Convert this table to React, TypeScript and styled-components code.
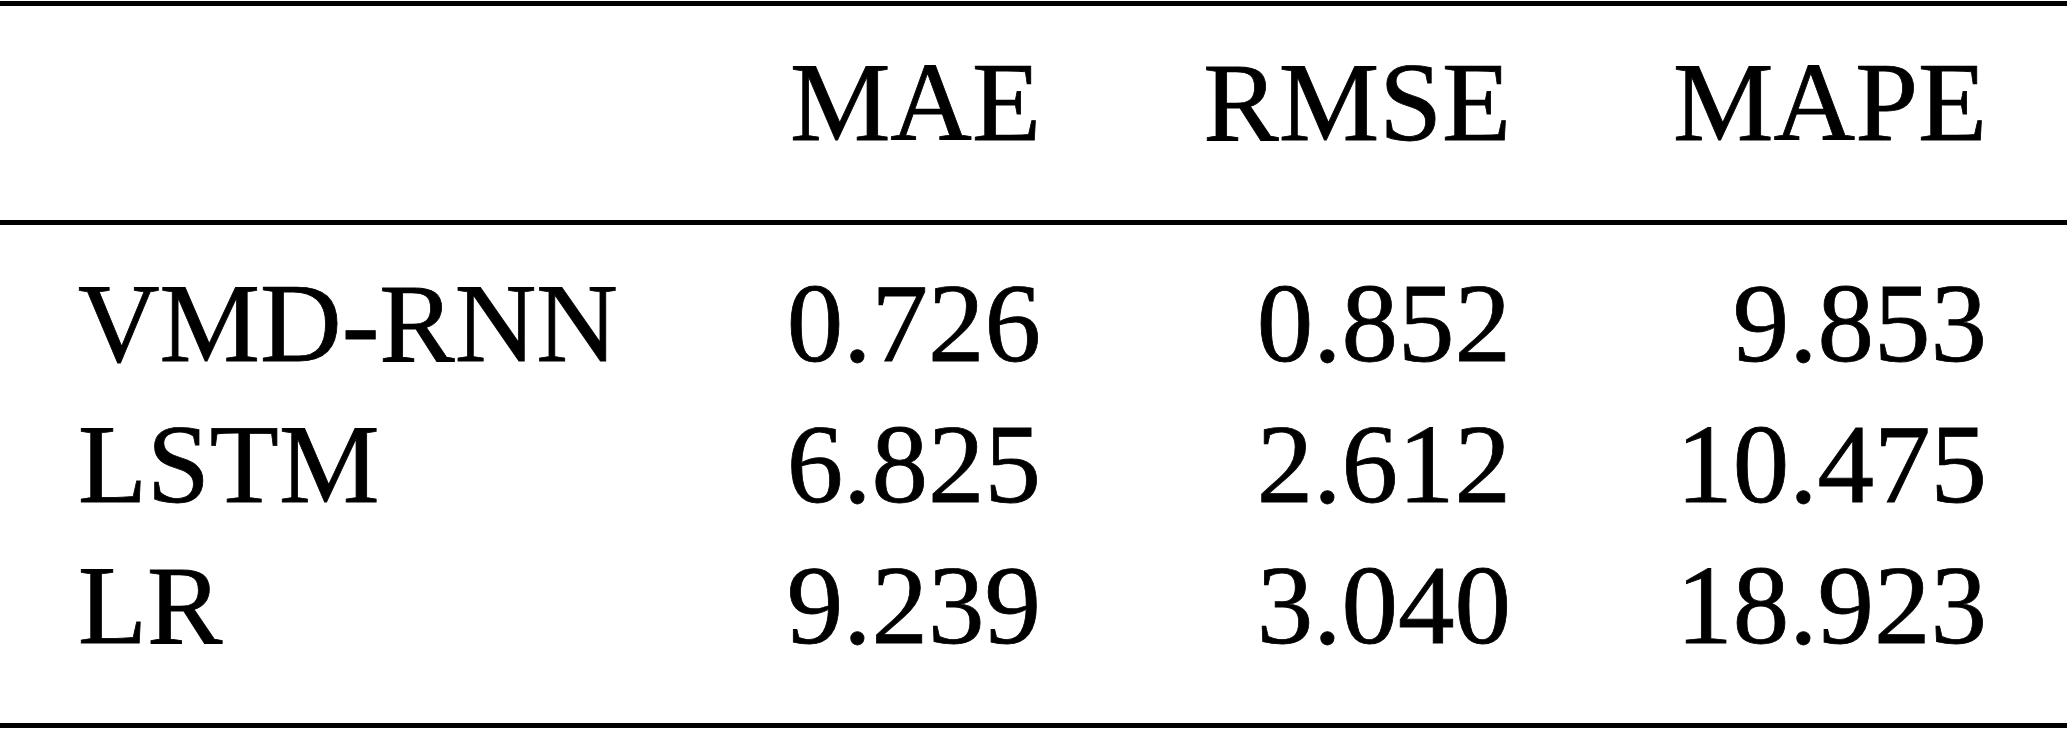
import React from "react";
import styled, { createGlobalStyle } from "styled-components";

const Global = createGlobalStyle`
  html, body { margin: 0; padding: 0; background: #ffffff; }
  body { font-family: "Liberation Serif", "Times New Roman", serif; color: #000; }
`;

const Page = styled.div`
  width: 2067px;
  padding-top: 1px;
`;

const Rule = styled.div<{ $h: number }>`
  width: 100%;
  height: ${(p) => p.$h}px;
  background: #000;
`;

const Section = styled.div<{ $top: number; $bottom: number }>`
  padding-top: ${(p) => p.$top}px;
  padding-bottom: ${(p) => p.$bottom}px;
`;

const Row = styled.div`
  display: grid;
  grid-template-columns: 700px 341px 470px 476px;
  font-size: 113px;
  line-height: 141px;
  white-space: nowrap;
  -webkit-text-stroke: 0.8px #000;
`;

const Label = styled.div`
  padding-left: 78px;
  text-align: left;
`;

const Num = styled.div`
  text-align: right;
`;

const headers = ["MAE", "RMSE", "MAPE"];
const rows: [string, string, string, string][] = [
  ["VMD-RNN", "0.726", "0.852", "9.853"],
  ["LSTM", "6.825", "2.612", "10.475"],
  ["LR", "9.239", "3.040", "18.923"],
];

export default function App() {
  return (
    <Page>
      <Global />
      <Rule $h={5} />
      <Section $top={25} $bottom={48}>
        <Row>
          <Label />
          {headers.map((h) => (
            <Num key={h}>{h}</Num>
          ))}
        </Row>
      </Section>
      <Rule $h={5} />
      <Section $top={27} $bottom={48}>
        {rows.map((r) => (
          <Row key={r[0]}>
            <Label>{r[0]}</Label>
            <Num>{r[1]}</Num>
            <Num>{r[2]}</Num>
            <Num>{r[3]}</Num>
          </Row>
        ))}
      </Section>
      <Rule $h={5} />
    </Page>
  );
}
